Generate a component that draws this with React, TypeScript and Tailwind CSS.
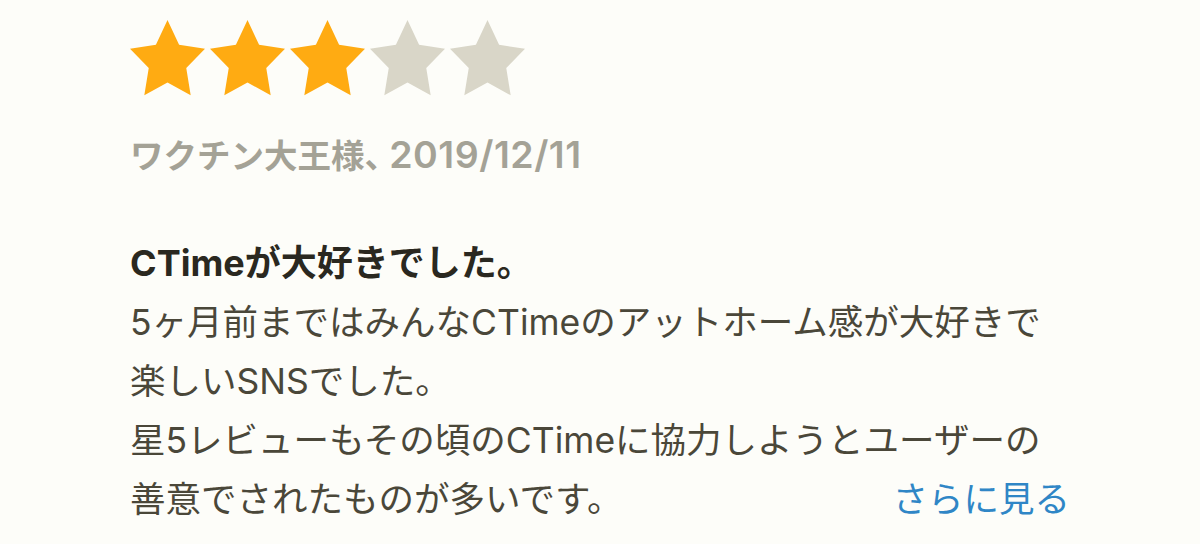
const FONT = { fontFamily: 'Inter, "Noto Sans CJK JP", sans-serif' };

function Star({ filled }: { filled: boolean }) {
  return (
    <svg width="75" height="76" viewBox="2 2 20 19.2" preserveAspectRatio="none" className="block">
      <polygon
        points="12,2 15.09,8.26 22,9.27 17,14.14 18.18,21.02 12,17.77 5.82,21.02 7,14.14 2,9.27 8.91,8.26"
        fill={filled ? "#ffab12" : "#d9d6c8"}
      />
    </svg>
  );
}

const lines = [
  "5ヶ月前まではみんなCTimeのアットホーム感が大好きで",
  "楽しいSNSでした。",
  "星5レビューもその頃のCTimeに協力しようとユーザーの",
];

export default function App() {
  return (
    <div className="w-[1200px] h-[544px] overflow-hidden bg-[#fdfdf9]" style={FONT}>
      <div className="pl-[130px] pt-[20px] w-[1070px]">
        {/* rating */}
        <div className="flex gap-[5px]">
          {[0, 1, 2, 3, 4].map((i) => (
            <Star key={i} filled={i < 3} />
          ))}
        </div>

        {/* author / date */}
        <div className="mt-[39px] flex items-baseline text-[33.5px] leading-[40px] font-semibold text-[#a4a296] whitespace-nowrap">
          <span>ワクチン大王様</span>
          <span style={{ fontFeatureSettings: '"halt"' }}>、</span>
          <span className="ml-[8px] text-[37.5px] tracking-[0.5px]">2019/12/11</span>
        </div>

        {/* review */}
        <div className="mt-[58px] text-[35.5px] leading-[59px] whitespace-nowrap">
          <div className="font-bold text-[36px] text-[#2a2820]">CTimeが大好きでした。</div>
          {lines.map((l) => (
            <div key={l} className="text-[#4a4739]">
              {l}
            </div>
          ))}
          <div className="flex justify-between">
            <span className="text-[#4a4739]">善意でされたものが多いです。</span>
            <span className="text-[#2f86c6]">さらに見る</span>
          </div>
        </div>
      </div>
    </div>
  );
}
